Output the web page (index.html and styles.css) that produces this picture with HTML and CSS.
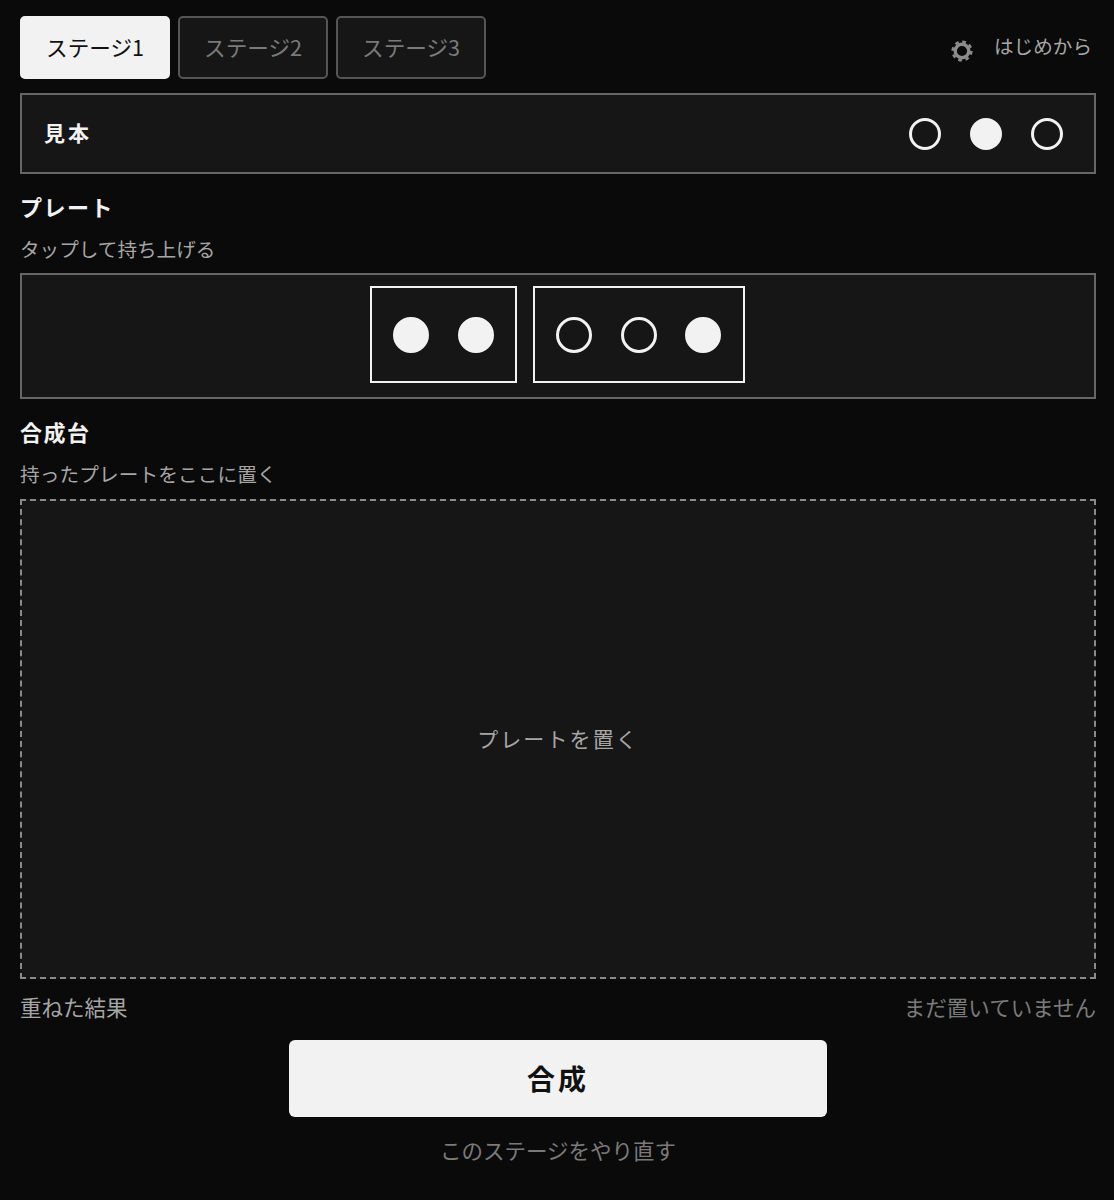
FILE: index.html
```html
<!DOCTYPE html>
<html lang="ja">
<head>
    <meta charset="UTF-8">
    <meta name="viewport" content="width=device-width, initial-scale=1.0">
    <title>合成</title>
    <link rel="stylesheet" href="styles.css">
</head>
<body>
    <div class="container">
        <!-- ステージ切り替え -->
        <div class="topbar">
            <div class="tabs">
                <button class="tab active">ステージ1</button>
                <button class="tab">ステージ2</button>
                <button class="tab">ステージ3</button>
            </div>
            <div class="top-actions">
                <svg class="gear" viewBox="0 0 24 24" width="24" height="24">
                    <circle cx="12" cy="12" r="6.8" fill="none" stroke="#8c8c8c" stroke-width="3.4"></circle>
                    <circle cx="12" cy="12" r="9.4" fill="none" stroke="#8c8c8c" stroke-width="2.4" stroke-dasharray="3.69 3.69"></circle>
                </svg>
                <span class="restart">はじめから</span>
            </div>
        </div>

        <!-- 見本 -->
        <div class="sample">
            <span class="sample-label">見本</span>
            <div class="dots sample-dots">
                <span class="dot"></span>
                <span class="dot filled"></span>
                <span class="dot"></span>
            </div>
        </div>

        <!-- プレート -->
        <h2 class="section-title">プレート</h2>
        <p class="section-hint">タップして持ち上げる</p>
        <div class="plate-tray">
            <div class="plate">
                <span class="dot filled"></span>
                <span class="dot filled"></span>
            </div>
            <div class="plate">
                <span class="dot"></span>
                <span class="dot"></span>
                <span class="dot filled"></span>
            </div>
        </div>

        <!-- 合成台 -->
        <h2 class="section-title table-title">合成台</h2>
        <p class="section-hint table-hint">持ったプレートをここに置く</p>
        <div class="dropzone">プレートを置く</div>

        <div class="result-row">
            <span class="result-label">重ねた結果</span>
            <span class="result-status">まだ置いていません</span>
        </div>

        <button class="combine">合成</button>
        <div class="retry">このステージをやり直す</div>
    </div>
</body>
</html>
```

FILE: styles.css
```css
:root {
    --bg-color: #0a0a0a;
    --panel-bg: #161616;
    --border-color: #666;
    --light: #f2f2f2;
    --muted: #a6a6a6;
    --dim: #7a7a7a;
}

* {
    box-sizing: border-box;
}

body {
    background-color: var(--bg-color);
    color: var(--light);
    font-family: "Noto Sans CJK JP", "Noto Sans", sans-serif;
    margin: 0;
}

.container {
    padding: 16px 18px 0 20px;
}

.topbar {
    display: flex;
    align-items: center;
    justify-content: space-between;
    margin-bottom: 14px;
}

.tabs {
    display: flex;
    gap: 8px;
}

.tab {
    width: 150px;
    height: 63px;
    background-color: var(--panel-bg);
    border: 2px solid #555;
    border-radius: 5px;
    color: var(--dim);
    font-family: inherit;
    font-size: 21.6px;
    padding: 0 0 3px;
}

.tab.active {
    background-color: var(--light);
    border-color: var(--light);
    color: #111;
}

.top-actions {
    display: flex;
    align-items: center;
    gap: 20px;
    padding-right: 4px;
}

.gear {
    margin-top: 7px;
}

.restart {
    color: var(--muted);
    font-size: 19.6px;
    margin-top: -4px;
}

.sample {
    display: flex;
    align-items: center;
    justify-content: space-between;
    height: 81px;
    background-color: var(--panel-bg);
    border: 2px solid var(--border-color);
    padding: 0 31px 0 22px;
}

.sample-label {
    font-size: 21px;
    font-weight: 700;
    letter-spacing: 3px;
    margin-top: -3px;
}

.dots,
.plate {
    display: flex;
    align-items: center;
}

.dot {
    display: block;
    width: 36px;
    height: 36px;
    border: 3px solid var(--light);
    border-radius: 50%;
}

.dot.filled {
    background-color: var(--light);
}

.sample-dots {
    gap: 29px;
}

.sample-dots .dot {
    width: 32px;
    height: 32px;
}

.section-title {
    font-size: 22px;
    line-height: 32px;
    font-weight: 700;
    letter-spacing: 1.5px;
    margin: 16px 0 0;
}

.section-hint {
    color: var(--muted);
    font-size: 19.6px;
    line-height: 30px;
    margin: 12px 0 9px;
}

.plate-tray {
    display: flex;
    justify-content: center;
    gap: 15.5px;
    height: 126px;
    background-color: var(--panel-bg);
    border: 2px solid var(--border-color);
    padding: 11px 2px 0 0;
}

.plate {
    height: 97px;
    gap: 28.5px;
    border: 2px solid var(--light);
    padding: 0 21.5px;
}

.table-hint {
    letter-spacing: 0.15px;
    margin-bottom: 10px;
}

.dropzone {
    display: flex;
    align-items: center;
    justify-content: center;
    height: 480px;
    background-color: var(--panel-bg);
    border: 2px dashed #8a8a8a;
    color: var(--muted);
    font-size: 21px;
    letter-spacing: 2.1px;
    padding-bottom: 2px;
}

.result-row {
    display: flex;
    align-items: center;
    justify-content: space-between;
    margin-top: 11px;
    height: 32px;
}

.result-label {
    color: var(--muted);
    font-size: 21.5px;
}

.result-status {
    color: var(--dim);
    font-size: 21.5px;
}

.combine {
    display: block;
    width: 538px;
    height: 77px;
    margin: 18px auto 0;
    background-color: var(--light);
    border: none;
    border-radius: 6px;
    color: #111;
    font-family: inherit;
    font-size: 28px;
    font-weight: 700;
    letter-spacing: 3px;
    padding: 0 0 2px;
}

.retry {
    color: var(--dim);
    font-size: 21.5px;
    line-height: 32px;
    text-align: center;
    margin-top: 17px;
}
```
